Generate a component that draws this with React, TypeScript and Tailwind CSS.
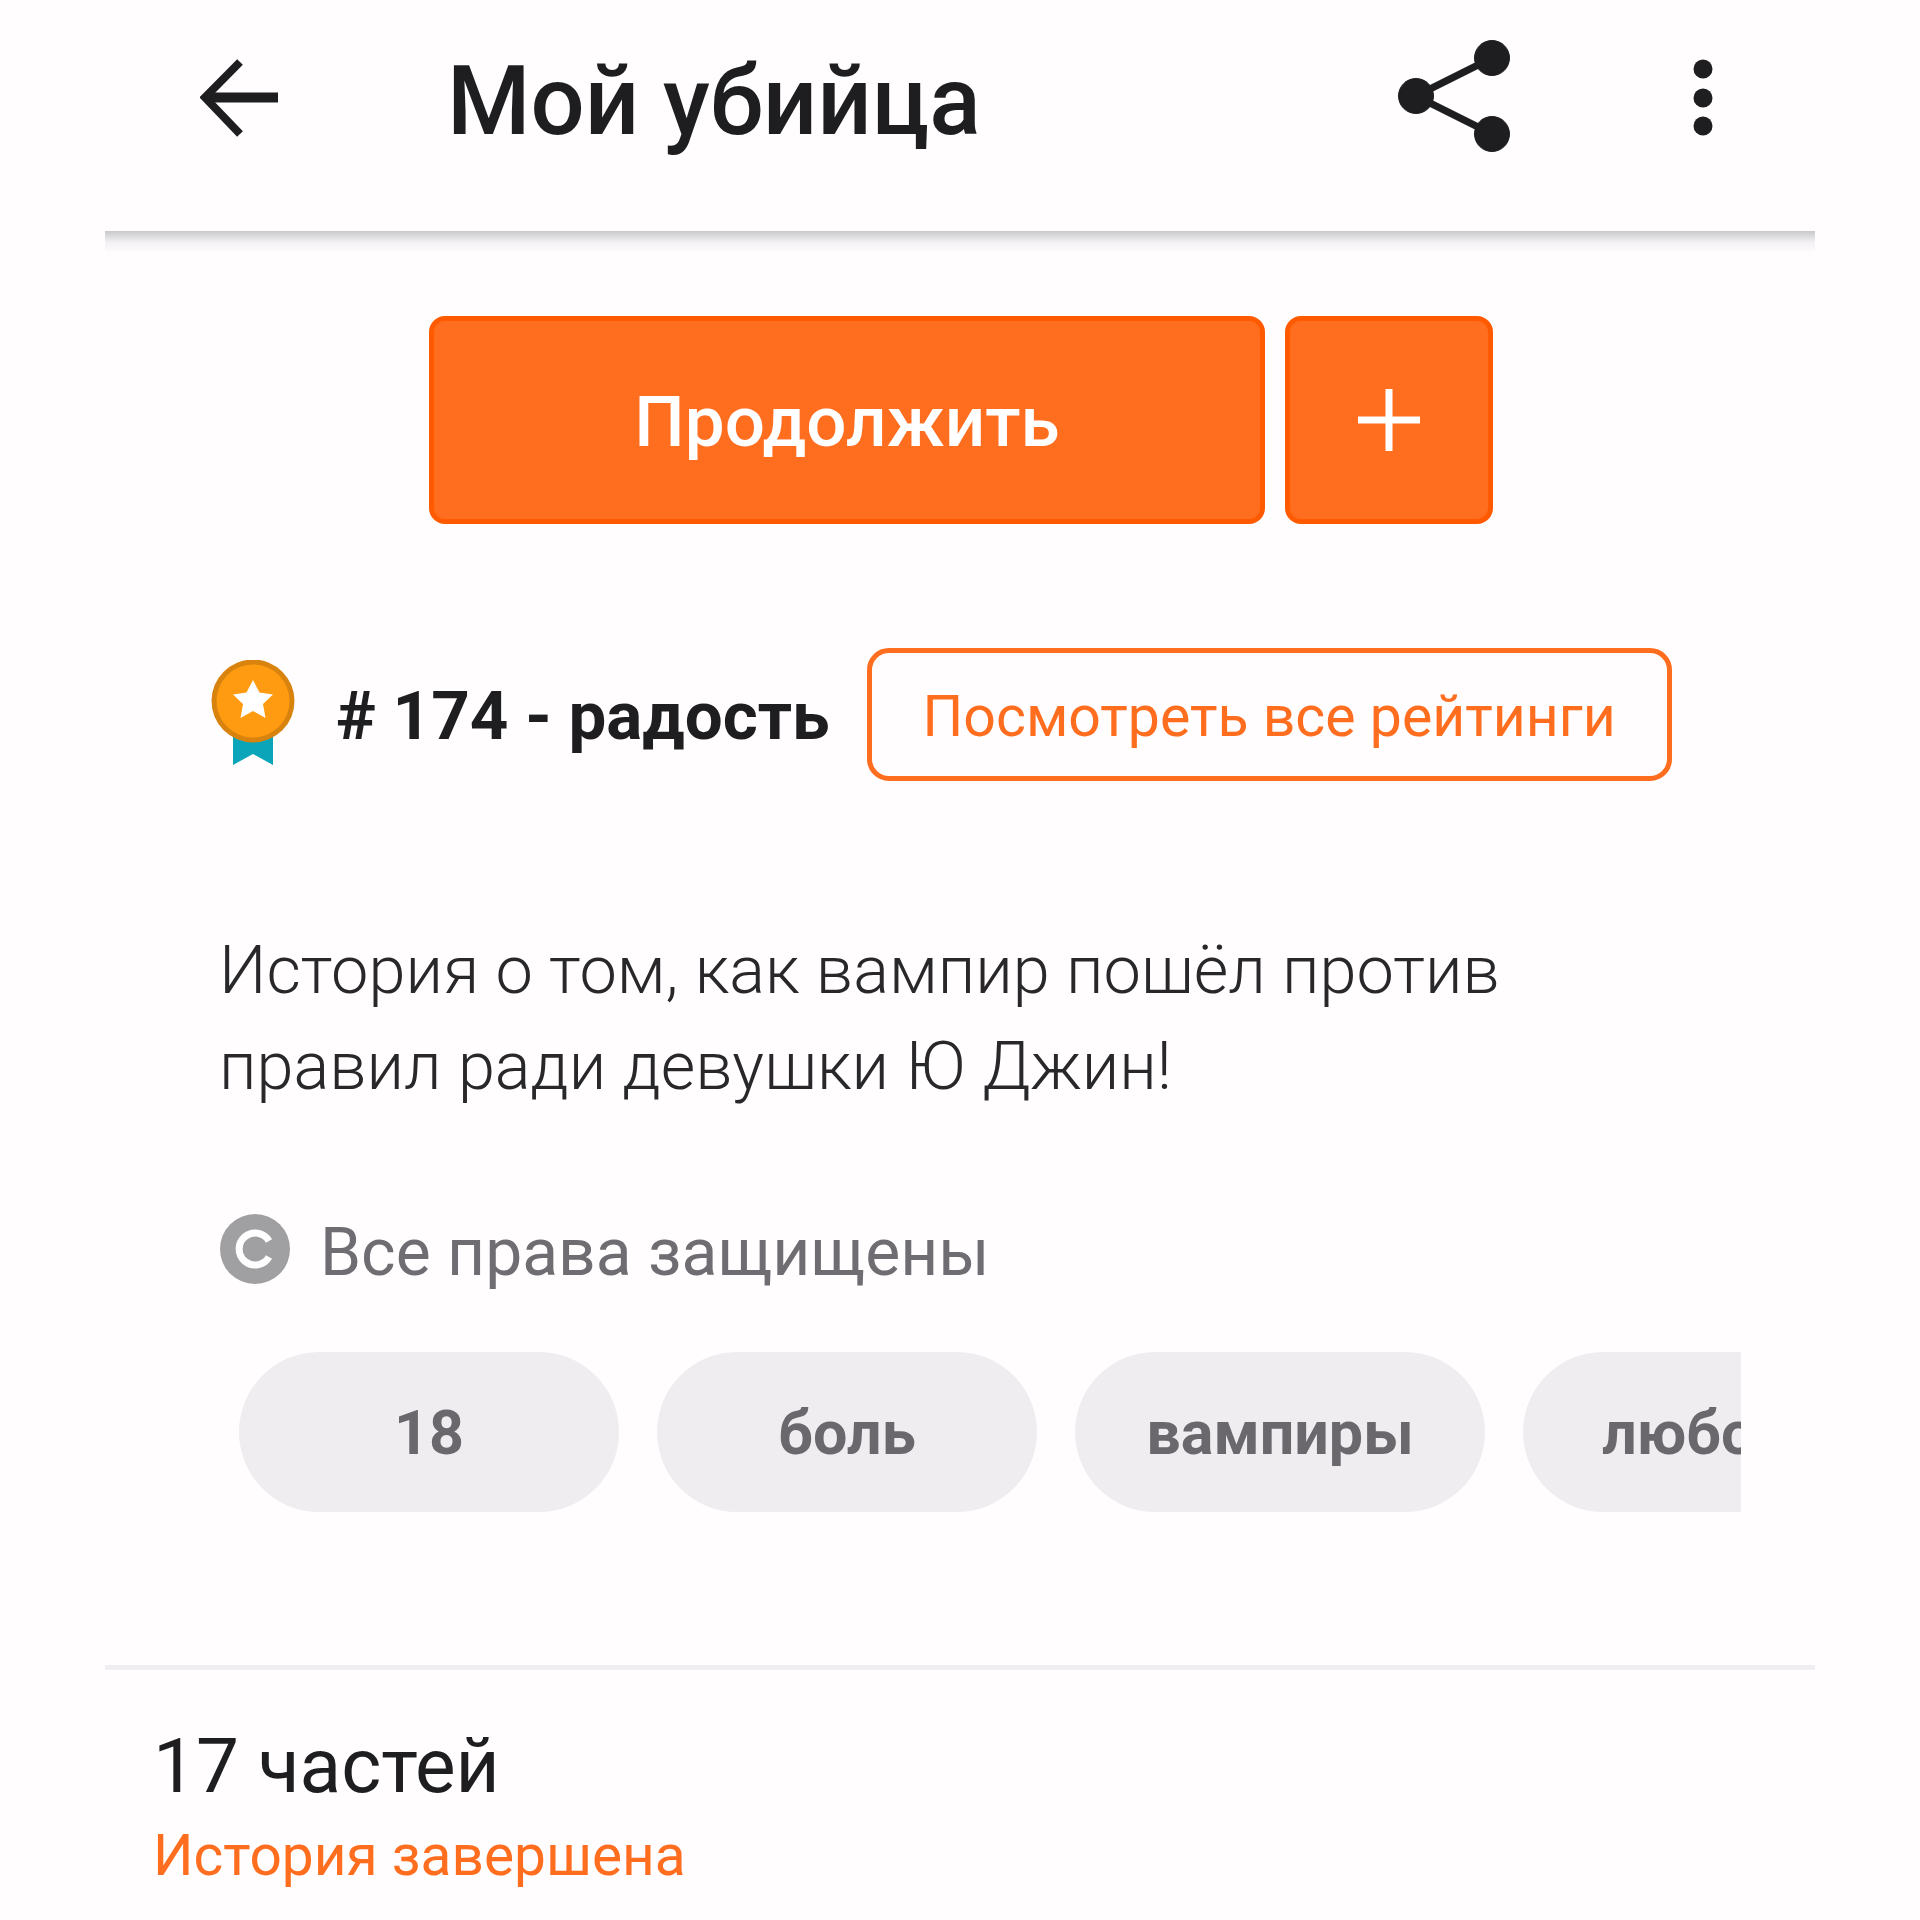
const Tag = ({ w, children }: { w: string; children: string }) => (
  <div className={`${w} h-[160px] shrink-0 rounded-[80px] bg-[#efedf0] flex items-center justify-center text-[#6a686c] text-[61px] font-bold pt-[3px]`}>
    {children}
  </div>
);

export default function App() {
  return (
    <div className="w-[1920px] h-[1920px] bg-[#fffdfe] overflow-hidden font-['Roboto',sans-serif] text-[#1e1d20]">
      <div className="w-[1710px] ml-[105px] h-full flex flex-col">
        <header className="h-[231px] shrink-0 flex items-start">
          <svg className="ml-[95px] mt-[59px] shrink-0" width="78" height="78" viewBox="0 0 78 78" fill="none" stroke="#1e1d20">
            <path d="M78 38.5H6" strokeWidth="10" />
            <path d="M40 3 5 38.5 40 75" strokeWidth="8" />
          </svg>
          <h1 className="ml-[169px] mt-[54px] text-[95.5px] font-medium leading-none whitespace-nowrap">Мой убийца</h1>
          <svg className="ml-auto mt-[40px] shrink-0" width="112" height="112" viewBox="0 0 112 112" fill="#1e1d20" stroke="#1e1d20">
            <circle cx="18" cy="56" r="17.5" /><circle cx="94" cy="18" r="17.5" /><circle cx="94" cy="94" r="17.5" />
            <path d="M18 56 94 18M18 56l76 38" strokeWidth="7" />
          </svg>
          <svg className="ml-[183px] mr-[102px] mt-[59px] shrink-0" width="20" height="78" viewBox="0 0 20 78" fill="#1e1d20">
            <circle cx="10" cy="10" r="9.5" /><circle cx="10" cy="39" r="9.5" /><circle cx="10" cy="67" r="9.5" />
          </svg>
        </header>
        <div className="h-[22px] shrink-0 bg-gradient-to-b from-[#c9c8cb] via-[#f2f0f2] to-[#fffdfe]" />
        <div className="mt-[63px] ml-[324px] flex gap-[20px]">
          <button className="w-[836px] h-[208px] rounded-[16px] border-[5px] border-[#ff5a00] bg-[#ff6d1f] text-white text-[71px] font-medium pt-[4px]">Продолжить</button>
          <button className="w-[208px] h-[208px] rounded-[16px] border-[5px] border-[#ff5a00] bg-[#ff6d1f] flex items-center justify-center">
            <svg width="62" height="62" viewBox="0 0 62 62" stroke="#fff" strokeWidth="7"><path d="M31 0v62M0 31h62" /></svg>
          </button>
        </div>
        <div className="mt-[124px] ml-[106px] flex items-center h-[133px]">
          <svg className="shrink-0 self-start mt-[12px]" width="84" height="106" viewBox="0 0 84 106">
            <path d="M22 70h40v35L42 94 22 105z" fill="#0aa5b8" />
            <circle cx="42" cy="41" r="41.5" fill="#d9830f" />
            <circle cx="42" cy="41" r="36.5" fill="#ff9b10" />
            <path d="M42 20l6.5 12.5 13.5 2-10 9.5 2.5 14L42 51l-12.500 7 2.500-14-10-9.500 13.500-2z" fill="#fff" />
          </svg>
          <span className="ml-[41px] pt-[4px] text-[67.3px] font-bold whitespace-nowrap"># 174 - радость</span>
          <button className="ml-[37px] w-[805px] h-[133px] rounded-[22px] border-[5px] border-[#ff6d1f] text-[#ff6d1f] text-[57.2px] whitespace-nowrap pt-[4px]">Посмотреть все рейтинги</button>
        </div>
        <p className="mt-[141px] ml-[114px] w-[1400px] text-[66.7px] font-light leading-[96px] text-[#28272a]">История о том, как вампир пошёл против правил ради девушки Ю Джин!</p>
        <div className="mt-[99px] ml-[115px] flex items-center h-[72px]">
          <svg className="shrink-0" width="70" height="70" viewBox="0 0 70 70">
            <circle cx="35" cy="35" r="35" fill="#a09fa2" />
            <path d="M49 27a16 16 0 1 0 0 16" fill="none" stroke="#fff" strokeWidth="7" />
          </svg>
          <span className="ml-[30px] pt-[6px] text-[66px] text-[#6f6d72] whitespace-nowrap">Все права защищены</span>
        </div>
        <div className="mt-[67px] ml-[134px] w-[1502px] flex gap-[38px] overflow-hidden">
          <Tag w="w-[380px]">18</Tag>
          <Tag w="w-[380px]">боль</Tag>
          <Tag w="w-[410px]">вампиры</Tag>
          <Tag w="w-[380px]">любовь</Tag>
        </div>
        <div className="mt-[153px] h-[5px] shrink-0 bg-[#f0eef1]" />
        <div className="mt-[51px] ml-[48px] text-[76.500px] leading-[90px] whitespace-nowrap">17 частей</div>
        <div className="mt-[5px] ml-[48px] text-[56.800px] leading-[80px] text-[#ff6d1f] whitespace-nowrap">История завершена</div>
      </div>
    </div>
  );
}
